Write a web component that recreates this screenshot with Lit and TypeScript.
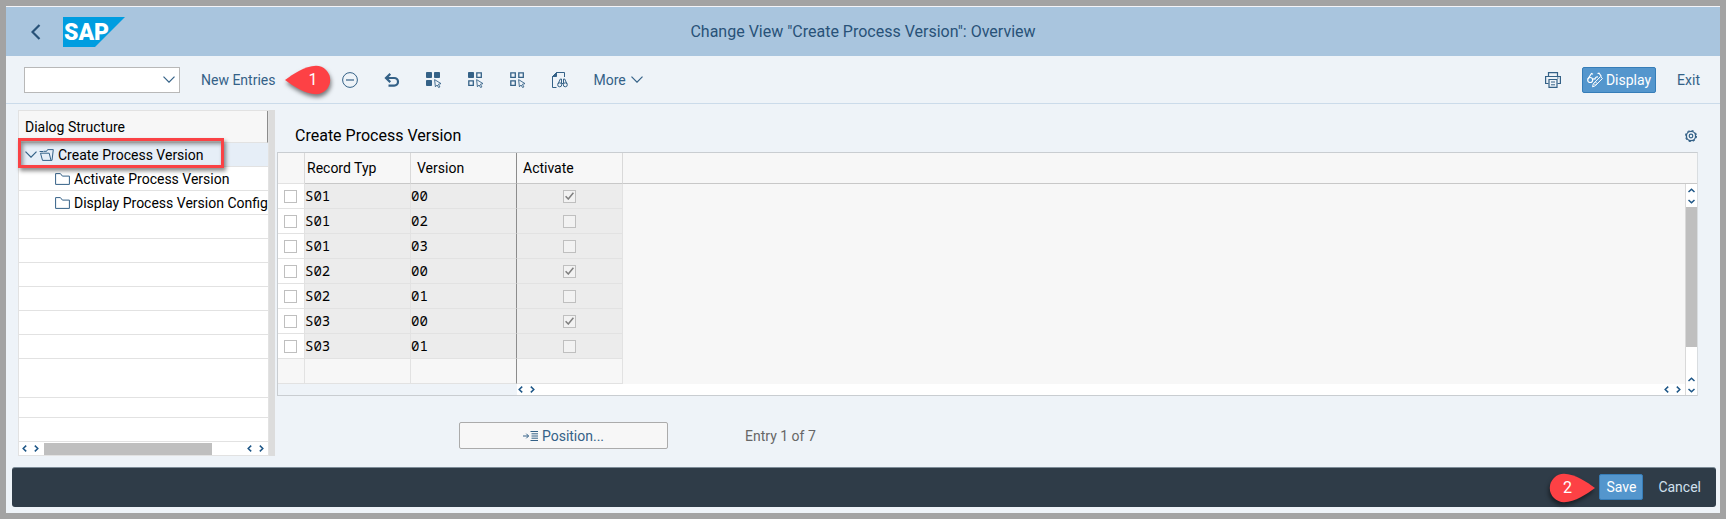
import { LitElement, html, css, svg, nothing, type TemplateResult } from "lit";
import { customElement, property } from "lit/decorators.js";

/* ---------- icons ---------- */

const ICONS: Record<string, { w: number; h: number; body: TemplateResult }> = {
  back: { w: 10, h: 16, body: svg`<path d="M8.5 1 1.5 8l7 7" stroke-width="2.2"/>` },
  chevron: { w: 12, h: 7, body: svg`<path d="M.5.7 6 6.2 11.5.7" stroke-width="1.2"/>` },
  minus: { w: 16, h: 16, body: svg`<circle cx="8" cy="8" r="7.4"/><path d="M4 8h8" stroke-width="1.2"/>` },
  undo: {
    w: 16, h: 16,
    body: svg`<path d="M2.500 6h7.700a3.800 3.800 0 0 1 0 7.600H4.500" stroke-width="2.200"/><path d="M6.300 1.900 2 6l4.300 4.100" stroke-width="2.200"/>`,
  },
  selectAll: {
    w: 16, h: 16,
    body: svg`<path d="M.5.5h5v5h-5zM8.5.5h5v5h-5zM.5 8.5h5v5h-5z" fill="currentColor"/><path d="m8.6 7.6 6.4 4-2.600.7 1.500 2.600-1.300.7-1.500-2.600-1.700 1.800z" stroke-width=".9"/>`,
  },
  selectBlock: {
    w: 16, h: 16,
    body: svg`<path d="M.5.5h5v5h-5z" fill="currentColor"/><path d="M8.800.8h4.500v4.500H8.800zM.8 8.800h4.500v4.500H.8z" stroke-width="1.300"/><path d="m8.6 7.6 6.4 4-2.600.7 1.500 2.600-1.300.7-1.500-2.600-1.700 1.800z" stroke-width=".9"/>`,
  },
  deselect: {
    w: 16, h: 16,
    body: svg`<path d="M.8.8h4.500v4.500H.8zM8.800.8h4.500v4.500H8.800zM.8 8.800h4.500v4.500H.8z" stroke-width="1.300"/><path d="m8.6 7.6 6.4 4-2.600.7 1.500 2.600-1.300.7-1.500-2.600-1.700 1.800z" stroke-width=".9"/>`,
  },
  find: {
    w: 16, h: 16,
    body: svg`<path d="M12.500 5V.5H4.500L.5 4.500v11h4"/><path d="M4.500.5v4h-4z" fill="currentColor"/><path d="M8.300 7 6 12M12.700 7 15 12M8.300 7h1.200v4.500M12.700 7h-1.200v4.500M9.600 11.500h1.800"/><circle cx="7.700" cy="12.800" r="2"/><circle cx="13.300" cy="12.800" r="2"/>`,
  },
  printer: {
    w: 16, h: 16,
    body: svg`<path d="M3.500 4V.6h9V4M3.500 11.500H.6v-7h14.800v7h-2.900" stroke-width="1.200"/><path d="M4 7.500h8v7.900H4z" stroke-width="1.200"/><path d="M6 10h4M6 12.800h4M12 6h1.500"/>`,
  },
  display: {
    w: 16, h: 16,
    body: svg`<circle cx="3.200" cy="8" r="2.500" stroke-width="1.200"/><path d="M.9 7 4.500 1.500 6 2.200M5.700 7.500C6.500 6.500 7.500 6.500 8 7.500M10.500 1.500l1.500-.3 2.500 3.300M8 7.500c0-2 1.200-2.800 3-2.500" stroke-width="1.200"/><path d="m5.500 14.800.8-3L13.500 4.600l1.900 1.900-7.200 7.300zM7 11.500l1.700 1.700M8.500 10l1.800 1.800"/>`,
  },
  gear: {
    w: 12, h: 12,
    body: svg`<circle cx="6" cy="6" r="4.600" stroke-width="1.300"/><circle cx="6" cy="6" r="5.400" stroke-width="1.200" stroke-dasharray="2.120 2.120"/><circle cx="6" cy="6" r="1.800" stroke-width="1.200"/>`,
  },
  folder: { w: 15, h: 12, body: svg`<path d="M.6.6h4.800l2 2.500h7v8.300H.6z"/>` },
  folderOpen: {
    w: 15, h: 12,
    body: svg`<path d="M3.500 11.400H13l1.300-10.800H8.600l-1 1.700H4.500M3.500 11.400 1.500 4.200h8.700l1.800 7.200M.6 2.500h3.600"/>`,
  },
  position: {
    w: 15, h: 10,
    body: svg`<path d="M0 5h5.500M3.300 2.700 5.600 5 3.300 7.300"/><path d="M7.500.5H15M8.500 2.800H15M8.500 5H15M8.500 7.200H15M7.500 9.500H15"/>`,
  },
  left: { w: 5, h: 7, body: svg`<path d="M4.200.6 1.200 3.500l3 2.900" stroke-width="1.500"/>` },
  right: { w: 5, h: 7, body: svg`<path d="m.8.6 3 2.900-3 2.900" stroke-width="1.500"/>` },
  up: { w: 7, h: 5, body: svg`<path d="M.5 4 3.500 1.200 6.500 4" stroke-width="1.500"/>` },
  down: { w: 7, h: 5, body: svg`<path d="m.5 1 3 2.800L6.500 1" stroke-width="1.500"/>` },
};

const icon = (name: string) => {
  const { w, h, body } = ICONS[name];
  return html`<svg width=${w} height=${h} viewBox="0 0 ${w} ${h}" fill="none" stroke="currentColor" aria-hidden="true">${body}</svg>`;
};

const shared = css`
  *, *::before, *::after { box-sizing: border-box; }
  svg { display: block; flex: none; }
  button, select, input { font: inherit; color: inherit; margin: 0; }
  button {
    display: inline-flex; align-items: center; justify-content: center;
    padding: 0; border: 0; background: none; white-space: nowrap; cursor: pointer;
  }
  .primary {
    height: 26px; padding: 0 4px; gap: 3px;
    color: #fff; background: #5496cd; border: 1px solid #367db8; border-radius: 2px;
  }
`;

/* ---------- numbered step marker ---------- */

@customElement("step-marker")
export class StepMarker extends LitElement {
  @property() step = "";
  @property() point: "left" | "right" = "left";

  static styles = css`
    :host { display: block; width: 46px; height: 30px; position: relative; }
    svg { display: block; overflow: visible; filter: drop-shadow(1px 3px 2px rgba(0, 0, 0, 0.5)); }
    .flip { transform: scaleX(-1); }
    .digit {
      position: absolute; inset: 0 0 0 9px;
      display: flex; align-items: center; justify-content: center;
      font-size: 16px; line-height: 30px; color: #fff;
    }
    .digit.right { inset: 0 10px 0 0; }
  `;

  render() {
    const right = this.point === "right";
    return html`
      <svg class=${right ? "flip" : ""} width="46" height="30" viewBox="0 0 46 30" aria-hidden="true">
        <path d="M0 15C8 9 20 1 31 .8a14.200 14.200 0 0 1 0 28.400C20 29 8 21 0 15z" fill="#fd4145" />
      </svg>
      <span class="digit ${this.point}">${this.step}</span>
    `;
  }
}

/* ---------- dialog structure tree ---------- */

@customElement("dialog-structure")
export class DialogStructure extends LitElement {
  static styles = [
    shared,
    css`
      :host { display: flex; flex: none; width: 257px; border-right: 6px solid #dcdcdc; }
      .panel { flex: 1; min-width: 0; border: 1px solid #e2e2e2; background: #fff; }
      .title {
        height: 32px; margin: 0; padding: 1px 6px 0; line-height: 30px;
        font-size: 14px; font-weight: 400;
        background: #f7f7f7; border-bottom: 1px solid #e2e2e2; border-right: 1px solid #8c8c8c;
      }
      .tree { list-style: none; margin: 0; padding: 0; position: relative; }
      .row {
        display: flex; align-items: center; height: 24px;
        border-bottom: 1px solid #e2e2e2; white-space: nowrap;
      }
      .row.tall { height: 39px; }
      .row.short { height: 20px; }
      .row.selected { background: #e6eef7; }
      .row svg { color: #346187; }
      .node { gap: 4px; height: 100%; max-width: 100%; justify-content: flex-start; }
      .root { gap: 2px; padding-left: 6px; }
      .root span { padding-left: 2px; }
      .child { padding-left: 36px; }
      .highlight {
        position: absolute; left: -1px; top: -5px; width: 206px; height: 30px;
        border: 3px solid #fa4245; pointer-events: none;
        box-shadow: 2px 3px 4px rgba(0, 0, 0, 0.45), inset 2px 3px 4px rgba(0, 0, 0, 0.4);
      }
      .scroll { display: flex; align-items: center; height: 13px; padding: 0 4px 0 3px; color: #1d5687; }
      .arrows { display: flex; gap: 7px; }
      .track { flex: 1; height: 12px; margin: 1px 35px 0 5px; }
      .thumb { width: 100%; height: 100%; background: #bfbfbf; }
    `,
  ];

  render() {
    const blanks = ["", "", "", "", "", "", "tall", "short", ""];
    return html`
      <section class="panel" aria-label="Dialog Structure">
        <h2 class="title">Dialog Structure</h2>
        <ul class="tree">
          <li class="row selected">
            <button class="node root">${icon("chevron")}${icon("folderOpen")}<span>Create Process Version</span></button>
          </li>
          <li class="row"><button class="node child">${icon("folder")}<span>Activate Process Version</span></button></li>
          <li class="row"><button class="node child">${icon("folder")}<span>Display Process Version Config</span></button></li>
          ${blanks.map((kind) => html`<li class="row ${kind}" aria-hidden="true"></li>`)}
          <li class="highlight" aria-hidden="true"></li>
        </ul>
        <div class="scroll">
          <span class="arrows">${icon("left")}${icon("right")}</span>
          <span class="track"><div class="thumb"></div></span>
          <span class="arrows">${icon("left")}${icon("right")}</span>
        </div>
      </section>
    `;
  }
}

/* ---------- process version table ---------- */

interface Entry { type: string; version: string; active: boolean; }

@customElement("version-table")
export class VersionTable extends LitElement {
  @property({ attribute: false }) entries: Entry[] = [];

  static styles = [
    shared,
    css`
      :host { display: block; border: 1px solid #c9cdd1; border-right-color: #d9dde0; }
      table { width: 100%; table-layout: fixed; border-collapse: separate; border-spacing: 0; }
      .c-pick { width: 27px; }
      .c-data { width: 106px; }
      .c-bar { width: 12px; }
      th {
        height: 31px; padding: 0 6px; text-align: left; font-weight: 400; line-height: 20px;
        background: #f7f7f7; border-bottom: 1px solid #c8c8c8; border-right: 1px solid #d9d9d9;
      }
      th.pick { border-bottom-color: #e2e2e2; }
      th.type { padding-left: 2px; }
      th.rest { border-right: 0; }
      td { height: 25px; padding: 0 1px 0 0; background: #ececec; border-bottom: 1px solid #e2e2e2; border-right: 1px solid #e2e2e2; }
      td.pick { background: #fff; }
      td.mono { font-family: "Noto Sans Mono", "Liberation Mono", monospace; line-height: 20px; }
      th.version, td.version { border-right-color: #8c8c8c; }
      tr.blank td { background: #f7f7f7; }
      td.rest { background: #f7f7f7; border: 0; }
      td.side { height: 1px; padding: 0; background: #fff; border: 0; border-left: 1px solid #d9d9d9; }
      td.corner { height: 11px; background: none; border: 0; }
      td.bottom { height: 11px; background: #fff; border: 0; }
      input {
        appearance: none; display: block; width: 13px; height: 13px; margin: 0 auto;
        border: 1px solid #bfbfbf; background: #fff;
      }
      input:disabled { background: #f2f2f2; }
      .tick { display: grid; place-items: center; }
      .tick > * { grid-area: 1 / 1; }
      .tick svg { color: #7f7f7f; z-index: 1; pointer-events: none; }
      .vbar { display: flex; flex-direction: column; align-items: center; height: 100%; padding: 4px 0 2px; color: #1d5687; }
      .pair { display: flex; flex-direction: column; gap: 6px; }
      .vthumb { flex: 1; width: 100%; margin: 3px 0 30px; background: #bfbfbf; }
      .hbar { display: flex; align-items: center; justify-content: space-between; padding: 0 3px 0 1px; color: #1d5687; }
      .arrows { display: flex; gap: 7px; }
    `,
  ];

  render() {
    return html`
      <table aria-label="Create Process Version">
        <colgroup>
          <col class="c-pick" /><col class="c-data" /><col class="c-data" /><col class="c-data" /><col /><col class="c-bar" />
        </colgroup>
        <thead>
          <tr>
            <th class="pick"></th>
            <th class="type">Record Typ</th>
            <th class="version">Version</th>
            <th>Activate</th>
            <th class="rest" colspan="2"></th>
          </tr>
        </thead>
        <tbody>
          ${this.entries.map(
            (e, i) => html`<tr>
              <td class="pick"><input type="checkbox" aria-label="Select ${e.type} ${e.version}" /></td>
              <td class="mono">${e.type}</td>
              <td class="mono version">${e.version}</td>
              <td>
                <label class="tick">
                  <input type="checkbox" aria-label="Activate ${e.type} ${e.version}" disabled .checked=${e.active} />
                  ${e.active
                    ? html`<svg width="9" height="8" viewBox="0 0 9 8" fill="none" stroke="currentColor" stroke-width="1.500"><path d="m.6 4.200 2.700 2.800L8.400.7" /></svg>`
                    : nothing}
                </label>
              </td>
              ${i === 0
                ? html`<td class="rest" rowspan=${this.entries.length + 1}></td>
                    <td class="side" rowspan=${this.entries.length + 2}>
                      <div class="vbar">
                        <span class="pair">${icon("up")}${icon("down")}</span>
                        <span class="vthumb"></span>
                        <span class="pair">${icon("up")}${icon("down")}</span>
                      </div>
                    </td>`
                : nothing}
            </tr>`
          )}
          <tr class="blank"><td></td><td></td><td class="version"></td><td></td></tr>
          <tr>
            <td class="corner" colspan="3"></td>
            <td class="bottom" colspan="2">
              <div class="hbar">
                <span class="arrows">${icon("left")}${icon("right")}</span>
                <span class="arrows">${icon("left")}${icon("right")}</span>
              </div>
            </td>
          </tr>
        </tbody>
      </table>
    `;
  }
}

/* ---------- page ---------- */

@customElement("app-root")
export class AppRoot extends LitElement {
  private entries: Entry[] = [
    { type: "S01", version: "00", active: true },
    { type: "S01", version: "02", active: false },
    { type: "S01", version: "03", active: false },
    { type: "S02", version: "00", active: true },
    { type: "S02", version: "01", active: false },
    { type: "S03", version: "00", active: true },
    { type: "S03", version: "01", active: false },
  ];

  static styles = [
    shared,
    css`
      :host {
        box-sizing: border-box; display: flex; flex-direction: column; min-height: 100vh;
        border: 6px solid #a3a3a3; background: #eef3f8; color: #000;
        font: 14px/20px Roboto, "Liberation Sans", sans-serif;
      }
      .shell {
        display: grid; grid-template-columns: 1fr auto 1fr; align-items: center;
        height: 50px; padding: 0 25px; background: #a9c5de; border-top: 1px solid #f4f4f8; color: #285278;
      }
      .brand { display: flex; align-items: center; gap: 22px; }
      .brand svg text { font: 900 23px Roboto, "Liberation Sans", sans-serif; }
      .shell h1 { margin: 0; font-size: 16px; font-weight: 400; }
      .toolbar {
        display: flex; align-items: center; gap: 26px; height: 48px; padding: 0 20px 0 18px;
        border-bottom: 1px solid #cbdbea; color: #346187;
      }
      .command { display: grid; align-items: center; width: 156px; margin-right: -5px; }
      .command > * { grid-area: 1 / 1; }
      .command select { appearance: none; width: 100%; height: 26px; background: #fff; border: 1px solid #b8b8b8; border-radius: 0; }
      .command svg { justify-self: end; margin-right: 5px; pointer-events: none; }
      .anchor { position: relative; display: flex; }
      .entries { margin-right: 41px; }
      .entries step-marker { position: absolute; left: calc(100% + 10px); top: -5px; }
      .more { gap: 5px; margin-left: -1px; }
      .end { display: flex; align-items: center; gap: 21px; margin-left: auto; }
      .body { display: flex; flex: 1; gap: 2px; padding: 0 22px 11px 12px; }
      dialog-structure { margin-top: 6px; }
      .detail { flex: 1; min-width: 0; }
      .caption { display: flex; align-items: center; justify-content: space-between; height: 48px; padding: 15px 1px 0 18px; }
      .caption h2 { margin: 0; font-size: 16px; font-weight: 400; }
      .caption button { color: #346187; }
      .locate { display: flex; align-items: center; gap: 77px; padding: 26px 0 0 182px; color: #666; }
      .position { width: 209px; height: 27px; gap: 4px; color: #346187; background: #f7f7f7; border: 1px solid #ababab; border-radius: 2px; }
      .actions {
        display: flex; align-items: center; justify-content: flex-end; gap: 15px;
        height: 40px; margin: 0 4px 6px 6px; padding: 0 15px 1px 0;
        background: #2f3c48; border-top: 1px solid #7d8c98; border-radius: 3px; color: #d1e0ee;
      }
      .save .primary { padding: 0 6px; }
      .save step-marker { position: absolute; right: calc(100% + 4px); top: -1px; }
    `,
  ];

  render() {
    return html`
      <header class="shell">
        <div class="brand">
          <button aria-label="Back">${icon("back")}</button>
          <svg width="62" height="30" viewBox="0 0 62 30" role="img" aria-label="SAP">
            <path d="M0 0h62L32 30H0z" fill="#009de0" />
            <text x="1" y="23" fill="#fff">SAP</text>
          </svg>
        </div>
        <h1>Change View "Create Process Version": Overview</h1>
      </header>
      <nav class="toolbar" aria-label="Toolbar">
        <div class="command">
          <select aria-label="Command"><option></option></select>
          ${icon("chevron")}
        </div>
        <div class="anchor entries">
          <button>New Entries</button>
          <step-marker step="1"></step-marker>
        </div>
        <button aria-label="Delete">${icon("minus")}</button>
        <button aria-label="Undo">${icon("undo")}</button>
        <button aria-label="Select All">${icon("selectAll")}</button>
        <button aria-label="Select Block">${icon("selectBlock")}</button>
        <button aria-label="Deselect All">${icon("deselect")}</button>
        <button aria-label="Find">${icon("find")}</button>
        <button class="more">More ${icon("chevron")}</button>
        <div class="end">
          <button aria-label="Print">${icon("printer")}</button>
          <button class="primary">${icon("display")}Display</button>
          <button>Exit</button>
        </div>
      </nav>
      <main class="body">
        <dialog-structure></dialog-structure>
        <div class="detail">
          <div class="caption">
            <h2>Create Process Version</h2>
            <button aria-label="Settings">${icon("gear")}</button>
          </div>
          <version-table .entries=${this.entries}></version-table>
          <div class="locate">
            <button class="position">${icon("position")}Position...</button>
            <span>Entry 1 of 7</span>
          </div>
        </div>
      </main>
      <footer class="actions">
        <div class="anchor save">
          <step-marker step="2" point="right"></step-marker>
          <button class="primary">Save</button>
        </div>
        <button>Cancel</button>
      </footer>
    `;
  }
}
